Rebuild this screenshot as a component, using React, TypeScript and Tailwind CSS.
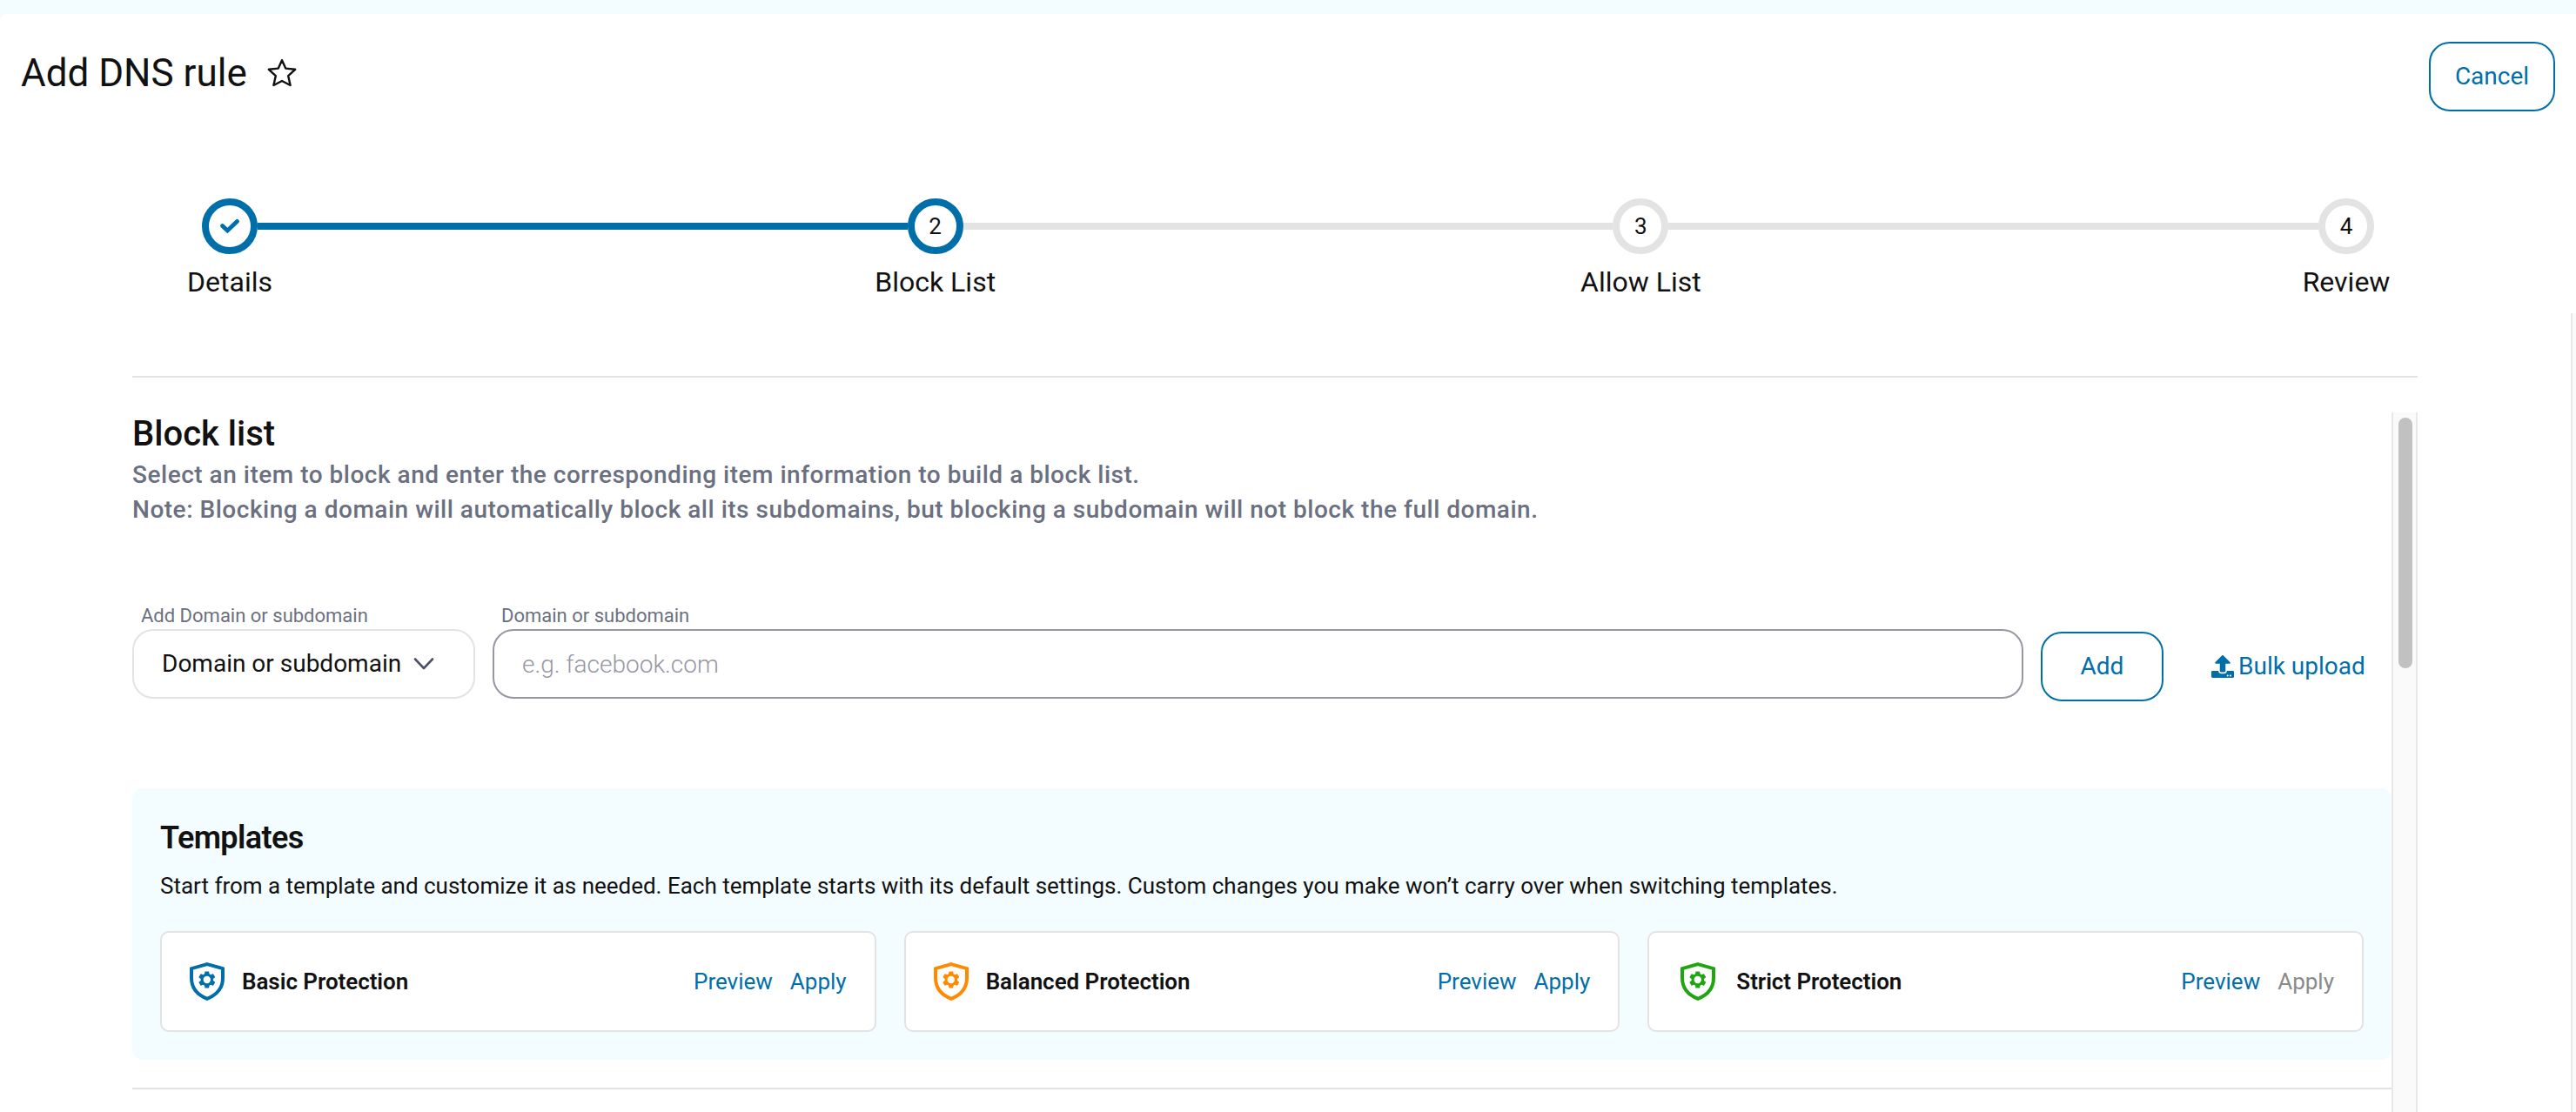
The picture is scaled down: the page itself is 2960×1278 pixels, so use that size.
import React from 'react';
import { FaUpload } from 'react-icons/fa';
import clsx from 'clsx';

type StepState = 'done' | 'current' | 'upcoming';

interface Step {
  id: number;
  label: string;
  state: StepState;
}

interface Template {
  name: string;
  iconClass: string;
  applied?: boolean;
}

const STEPS: Step[] = [
  { id: 1, label: 'Details', state: 'done' },
  { id: 2, label: 'Block List', state: 'current' },
  { id: 3, label: 'Allow List', state: 'upcoming' },
  { id: 4, label: 'Review', state: 'upcoming' },
];

const TEMPLATES: Template[] = [
  { name: 'Basic Protection', iconClass: 'w-10 text-[#006fa9]' },
  { name: 'Balanced Protection', iconClass: 'w-10 text-[#ff8a00]' },
  { name: 'Strict Protection', iconClass: 'w-12 text-[#1ea50f]', applied: true },
];

const StarIcon = () => (
  <svg width="36" height="36" viewBox="0 0 36 36" fill="none" stroke="currentColor" strokeWidth="2.4" strokeLinejoin="round">
    <path d="M18 3.2 L22.2 12.6 L33.2 13.8 L25.2 21.2 L27.6 32 L18 27 L8.4 32 L10.8 21.2 L2.8 13.8 L13.8 12.6 Z" />
  </svg>
);

const CheckIcon = () => (
  <svg width="24" height="20" viewBox="0 0 24 20" fill="none" stroke="currentColor" strokeWidth="4.8" strokeLinejoin="miter" strokeLinecap="round">
    <path d="M3.6 9.6 L9.4 15 L20.4 4.4" />
  </svg>
);

const ChevronIcon = () => (
  <svg width="24" height="16" viewBox="0 0 24 16" fill="none" stroke="currentColor" strokeWidth="2.6" strokeLinecap="round" strokeLinejoin="round">
    <path d="M2 2.5 L12 13 L22 2.5" />
  </svg>
);

const ShieldIcon = ({ className }: { className?: string }) => (
  <svg height="44" viewBox="0 0 40 44" className={className}>
    <path d="M20 2.1 L38 7.2 V18 C38 29.5 31 37.5 20 41.8 C9 37.5 2 29.5 2 18 V7.2 Z" fill="none" stroke="currentColor" strokeWidth="4" />
    <path
      transform="translate(7.8 8)"
      fill="currentColor"
      fillRule="evenodd"
      d="M19.14 12.94c.04-.3.06-.61.06-.94 0-.32-.02-.64-.07-.94l2.03-1.58c.18-.14.23-.41.12-.61l-1.92-3.32c-.12-.22-.37-.29-.59-.22l-2.39.96c-.5-.38-1.03-.7-1.62-.94L14.4 2.81c-.04-.24-.24-.41-.48-.41h-3.84c-.24 0-.43.17-.47.41L9.25 5.35C8.66 5.59 8.12 5.92 7.63 6.29L5.24 5.33c-.22-.08-.47 0-.59.22L2.74 8.87c-.12.21-.08.47.12.61l2.03 1.58c-.05.3-.09.63-.09.94s.02.64.07.94l-2.03 1.58c-.18.14-.23.41-.12.61l1.92 3.32c.12.22.37.29.59.22l2.39-.96c.5.38 1.03.7 1.62.94l.36 2.54c.05.24.24.41.48.41h3.84c.24 0 .44-.17.47-.41l.36-2.54c.59-.24 1.13-.56 1.62-.94l2.39.96c.22.08.47 0 .59-.22l1.92-3.32c.12-.22.07-.47-.12-.61L19.14 12.94z M12 7.8a4.2 4.2 0 1 0 0 8.4 4.2 4.2 0 0 0 0-8.4z"
    />
  </svg>
);

const Stepper: React.FC<{ steps: Step[] }> = ({ steps }) => (
  <div className="flex items-center pl-[232px] pr-[226px] pt-[100px]">
    {steps.map((step, index) => (
      <React.Fragment key={step.id}>
        {index > 0 && (
          <div className={clsx('h-2 flex-1 self-start mt-7', step.state === 'upcoming' ? 'bg-[#e3e3e3]' : 'bg-[#006fa9]')} />
        )}
        <div className="flex w-16 flex-col items-center gap-3">
          <div
            className={clsx(
              'flex size-16 shrink-0 items-center justify-center rounded-full border-8 text-[26px] leading-8',
              step.state === 'upcoming' ? 'border-[#e3e3e3]' : 'border-[#006fa9]',
            )}
          >
            {step.state === 'done' ? (
              <span className="text-[#006fa9]"><CheckIcon /></span>
            ) : (
              step.id
            )}
          </div>
          <span className="whitespace-nowrap text-[32px] leading-10">{step.label}</span>
        </div>
      </React.Fragment>
    ))}
  </div>
);

const TemplateCard: React.FC<{ template: Template }> = ({ template }) => (
  <div className="flex h-[116px] items-center rounded-[10px] border-2 border-[#e3e3e3] bg-white px-8 text-[26px] leading-8">
    <ShieldIcon className={template.iconClass} />
    <h3 className="ml-5 flex-1 font-semibold tracking-[-0.05px]">{template.name}</h3>
    <div className="flex gap-5 text-[#006fa9]">
      <button>Preview</button>
      <button className={clsx(template.applied && 'text-[#8a8a8a]')}>Apply</button>
    </div>
  </div>
);

export default function App() {
  return (
    <div className="h-[1278px] w-[2960px] overflow-hidden bg-[#f3fcff] pt-4 font-['Roboto',sans-serif] text-[#111111]">
      <div className="flex h-full rounded-tl-lg bg-white">
        <div className="flex min-w-0 flex-1 flex-col">
          <header className="flex h-28 items-start justify-between pl-6 pt-8">
            <div className="flex items-center gap-[22px] pt-2.5">
              <h1 className="text-[44px] leading-[52px]">Add DNS rule</h1>
              <StarIcon />
            </div>
            <button className="mr-[18px] h-20 w-[145px] rounded-3xl border-2 border-[#006fa9] text-[28px] text-[#006fa9]">
              Cancel
            </button>
          </header>

          <Stepper steps={STEPS} />

          <main className="ml-[152px] mt-[88px] flex w-[2626px] flex-1 flex-col border-t-2 border-[#e3e3e3]">
            <div className="mt-10 flex flex-1">
              <div className="w-[2596px]">
                <h2 className="pt-px text-[40px] font-medium leading-[48px]">Block list</h2>
                <p className="mt-[3px] text-[28px] font-medium leading-10 tracking-[0.515px] text-[#6b7080]">
                  Select an item to block and enter the corresponding item information to build a block list.
                  <br />
                  Note: Blocking a domain will automatically block all its subdomains, but blocking a subdomain will not block the full domain.
                </p>

                <div className="mt-[86px] flex items-end gap-5">
                  <div className="w-[394px]">
                    <label className="block pl-2.5 text-[22px] leading-[31px] text-[#6b7080]">Add Domain or subdomain</label>
                    <button className="flex h-20 w-full items-center gap-3.5 rounded-3xl border-2 border-[#e3e3e3] pl-8 text-[28px]">
                      <span>Domain or subdomain</span>
                      <span className="text-[#4b5063]"><ChevronIcon /></span>
                    </button>
                  </div>
                  <div className="w-[1759px]">
                    <label className="block pl-2.5 text-[22px] leading-[31px] text-[#6b7080]">Domain or subdomain</label>
                    <input
                      className="block h-20 w-full rounded-3xl border-2 border-[#9796a3] px-8 text-[28px] font-light placeholder:text-[#9796a3]"
                      placeholder="e.g. facebook.com"
                    />
                  </div>
                  <button className="-mb-[3px] h-20 w-[141px] rounded-3xl border-2 border-[#006fa9] text-[28px] text-[#006fa9]">Add</button>
                  <button className="-mb-[3px] ml-[35px] flex h-20 items-center gap-[5px] text-[28px] text-[#006fa9]">
                    <FaUpload size={26} />
                    Bulk upload
                  </button>
                </div>

                <section className="mt-[103px] h-[312px] rounded-xl bg-[#f3fcff] px-8 pt-9">
                  <h2 className="text-[36px] font-semibold leading-[42px] tracking-[-0.6px]">Templates</h2>
                  <p className="mt-[18px] text-[26px] leading-8 tracking-[-0.01px]">
                    Start from a template and customize it as needed. Each template starts with its default settings. Custom changes you make won’t carry over when switching templates.
                  </p>
                  <div className="mt-9 grid grid-cols-3 gap-8">
                    {TEMPLATES.map((template) => (
                      <TemplateCard key={template.name} template={template} />
                    ))}
                  </div>
                </section>

                <hr className="mt-8 border-t-2 border-[#e3e3e3]" />
              </div>

              {/* list scrollbar */}
              <div className="w-[30px] border-x-2 border-[#e8e8e8] bg-[#fafafa] pl-1.5 pt-1.5">
                <div className="h-72 w-4 rounded-full bg-[#c1c1c1]" />
              </div>
            </div>
          </main>
        </div>

        {/* page scrollbar */}
        <div className="mt-[344px] w-1.5 border-l-2 border-[#e8e8e8] bg-[#fafafa]" />
      </div>
    </div>
  );
}
